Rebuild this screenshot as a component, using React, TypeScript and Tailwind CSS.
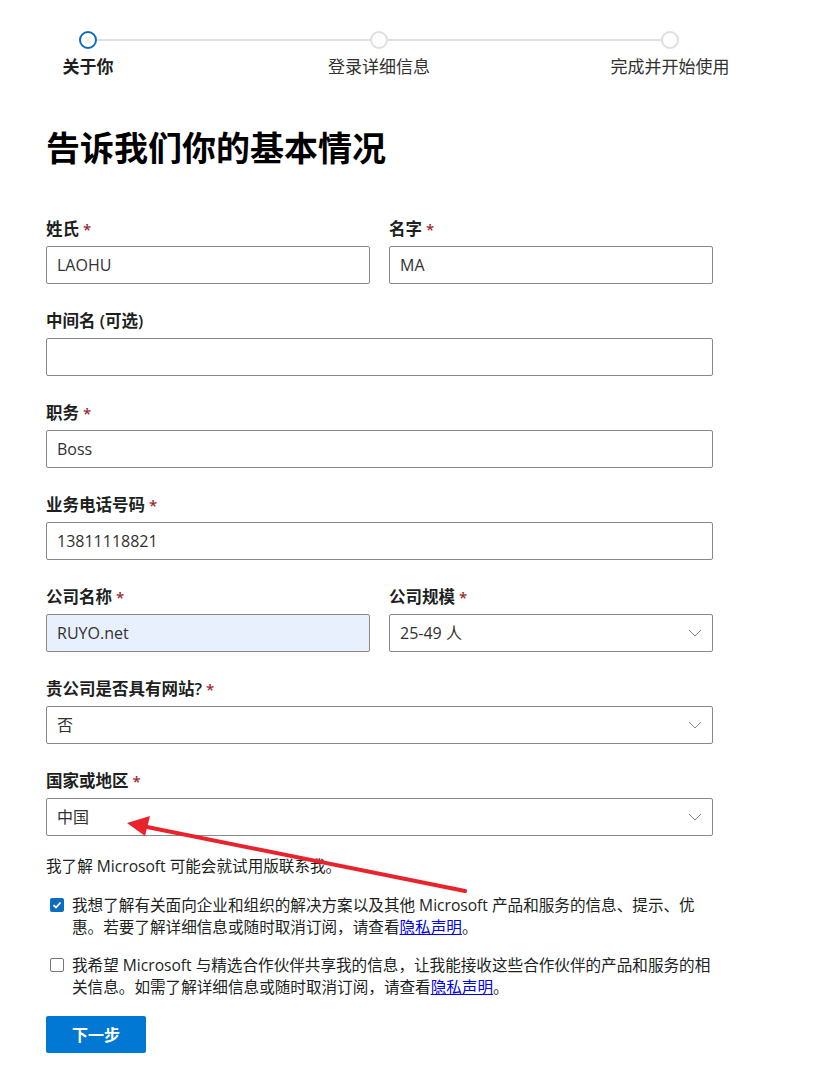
import React from 'react';

const FONT = { fontFamily: '"Segoe UI", "Open Sans", "Noto Sans CJK SC", sans-serif' };

const Label: React.FC<{ text: string; required?: boolean }> = ({ text, required }) => (
  <div className="text-[16.5px] leading-[22px] font-semibold text-[#201f1e] mb-[6px]">
    {text}
    {required && <span className="text-[#a4262c] ml-[4px] text-[15px]">*</span>}
  </div>
);

const TextInput: React.FC<{ value?: string; filled?: boolean }> = ({ value = '', filled }) => (
  <div
    className={`h-[38px] border border-[#8a8886] rounded-[2px] px-[10px] flex items-center text-[16px] text-[#323130] ${
      filled ? 'bg-[#e8f0fe]' : 'bg-white'
    }`}
  >
    {value}
  </div>
);

const SelectInput: React.FC<{ value: string }> = ({ value }) => (
  <div className="h-[38px] border border-[#8a8886] rounded-[2px] pl-[10px] pr-[10px] flex items-center justify-between text-[16px] text-[#323130] bg-white">
    <span>{value}</span>
    <svg width="14" height="8" viewBox="0 0 14 8" fill="none">
      <polyline points="1,1 7,7 13,1" stroke="#8a8886" strokeWidth="1" />
    </svg>
  </div>
);

const Field: React.FC<{ label: string; required?: boolean; children: React.ReactNode }> = ({ label, required, children }) => (
  <div>
    <Label text={label} required={required} />
    {children}
  </div>
);

export default function App() {
  return (
    <div className="relative w-[839px] min-h-[1080px] bg-white text-[#201f1e]" style={FONT}>
      <div className="pt-[31px] pl-[46px] w-[713px]">
        {/* stepper */}
        <div className="ml-[33px] w-[600px] flex items-center">
          <div className="w-[18px] h-[18px] rounded-full border-2 border-[#0f6cbd] shrink-0" />
          <div className="flex-1 h-[2px] bg-[#e1dfdd]" />
          <div className="w-[18px] h-[18px] rounded-full border-2 border-[#e1dfdd] shrink-0" />
          <div className="flex-1 h-[2px] bg-[#e1dfdd]" />
          <div className="w-[18px] h-[18px] rounded-full border-2 border-[#e1dfdd] shrink-0" />
        </div>
        <div className="-ml-[38px] mt-[7px] flex gap-[131px] text-[17px] leading-[22px]">
          <div className="w-[160px] shrink-0 text-center font-bold text-[#201f1e]">关于你</div>
          <div className="w-[160px] shrink-0 text-center text-[#323130]">登录详细信息</div>
          <div className="w-[160px] shrink-0 text-center text-[#323130]">完成并开始使用</div>
        </div>

        <h1 className="mt-[50px] text-[34px] leading-[40px] font-bold text-black">告诉我们你的基本情况</h1>

        <div className="mt-[50px] flex flex-col gap-[26px]">
          <div className="grid grid-cols-2 gap-[19px]">
            <Field label="姓氏" required>
              <TextInput value="LAOHU" />
            </Field>
            <Field label="名字" required>
              <TextInput value="MA" />
            </Field>
          </div>
          <Field label="中间名 (可选)">
            <TextInput />
          </Field>
          <Field label="职务" required>
            <TextInput value="Boss" />
          </Field>
          <Field label="业务电话号码" required>
            <TextInput value="13811118821" />
          </Field>
          <div className="grid grid-cols-2 gap-[19px]">
            <Field label="公司名称" required>
              <TextInput value="RUYO.net" filled />
            </Field>
            <Field label="公司规模" required>
              <SelectInput value="25-49 人" />
            </Field>
          </div>
          <Field label="贵公司是否具有网站?" required>
            <SelectInput value="否" />
          </Field>
          <Field label="国家或地区" required>
            <SelectInput value="中国" />
          </Field>
        </div>

        <p className="mt-[19px] text-[15.6px] leading-[22px] text-[#201f1e]">我了解 Microsoft 可能会就试用版联系我。</p>

        <div className="mt-[17px] flex items-start gap-[8px] text-[15.6px] leading-[22px]">
          <div className="mt-[4px] ml-[4px] w-[14px] h-[14px] rounded-[2px] bg-[#0f6cbd] flex items-center justify-center shrink-0">
            <svg width="10" height="10" viewBox="0 0 10 10" fill="none">
              <polyline points="1.5,5.2 4,7.5 8.5,2.5" stroke="white" strokeWidth="1.8" />
            </svg>
          </div>
          <p className="whitespace-nowrap">
            我想了解有关面向企业和组织的解决方案以及其他 Microsoft 产品和服务的信息、提示、优
            <br />
            惠。若要了解详细信息或随时取消订阅，请查看<a className="text-[#0000ee] underline">隐私声明</a>。
          </p>
        </div>

        <div className="mt-[16px] flex items-start gap-[8px] text-[15.6px] leading-[22px]">
          <div className="mt-[4px] ml-[4px] w-[14px] h-[14px] rounded-[2px] border border-[#767676] bg-white shrink-0" />
          <p className="whitespace-nowrap">
            我希望 Microsoft 与精选合作伙伴共享我的信息，让我能接收这些合作伙伴的产品和服务的相
            <br />
            关信息。如需了解详细信息或随时取消订阅，请查看<a className="text-[#0000ee] underline">隐私声明</a>。
          </p>
        </div>

        <button className="mt-[18px] w-[100px] h-[37px] rounded-[2px] bg-[#0078d4] text-white text-[16px] font-bold">
          下一步
        </button>
      </div>

      {/* red annotation arrow */}
      <svg className="absolute inset-0 pointer-events-none" width="839" height="1080" viewBox="0 0 839 1080">
        <line x1="465" y1="891" x2="142" y2="826" stroke="#e8232b" strokeWidth="4" strokeLinecap="round" />
        <polygon points="127,823 150,816 145,836" fill="#e8232b" />
      </svg>
    </div>
  );
}
